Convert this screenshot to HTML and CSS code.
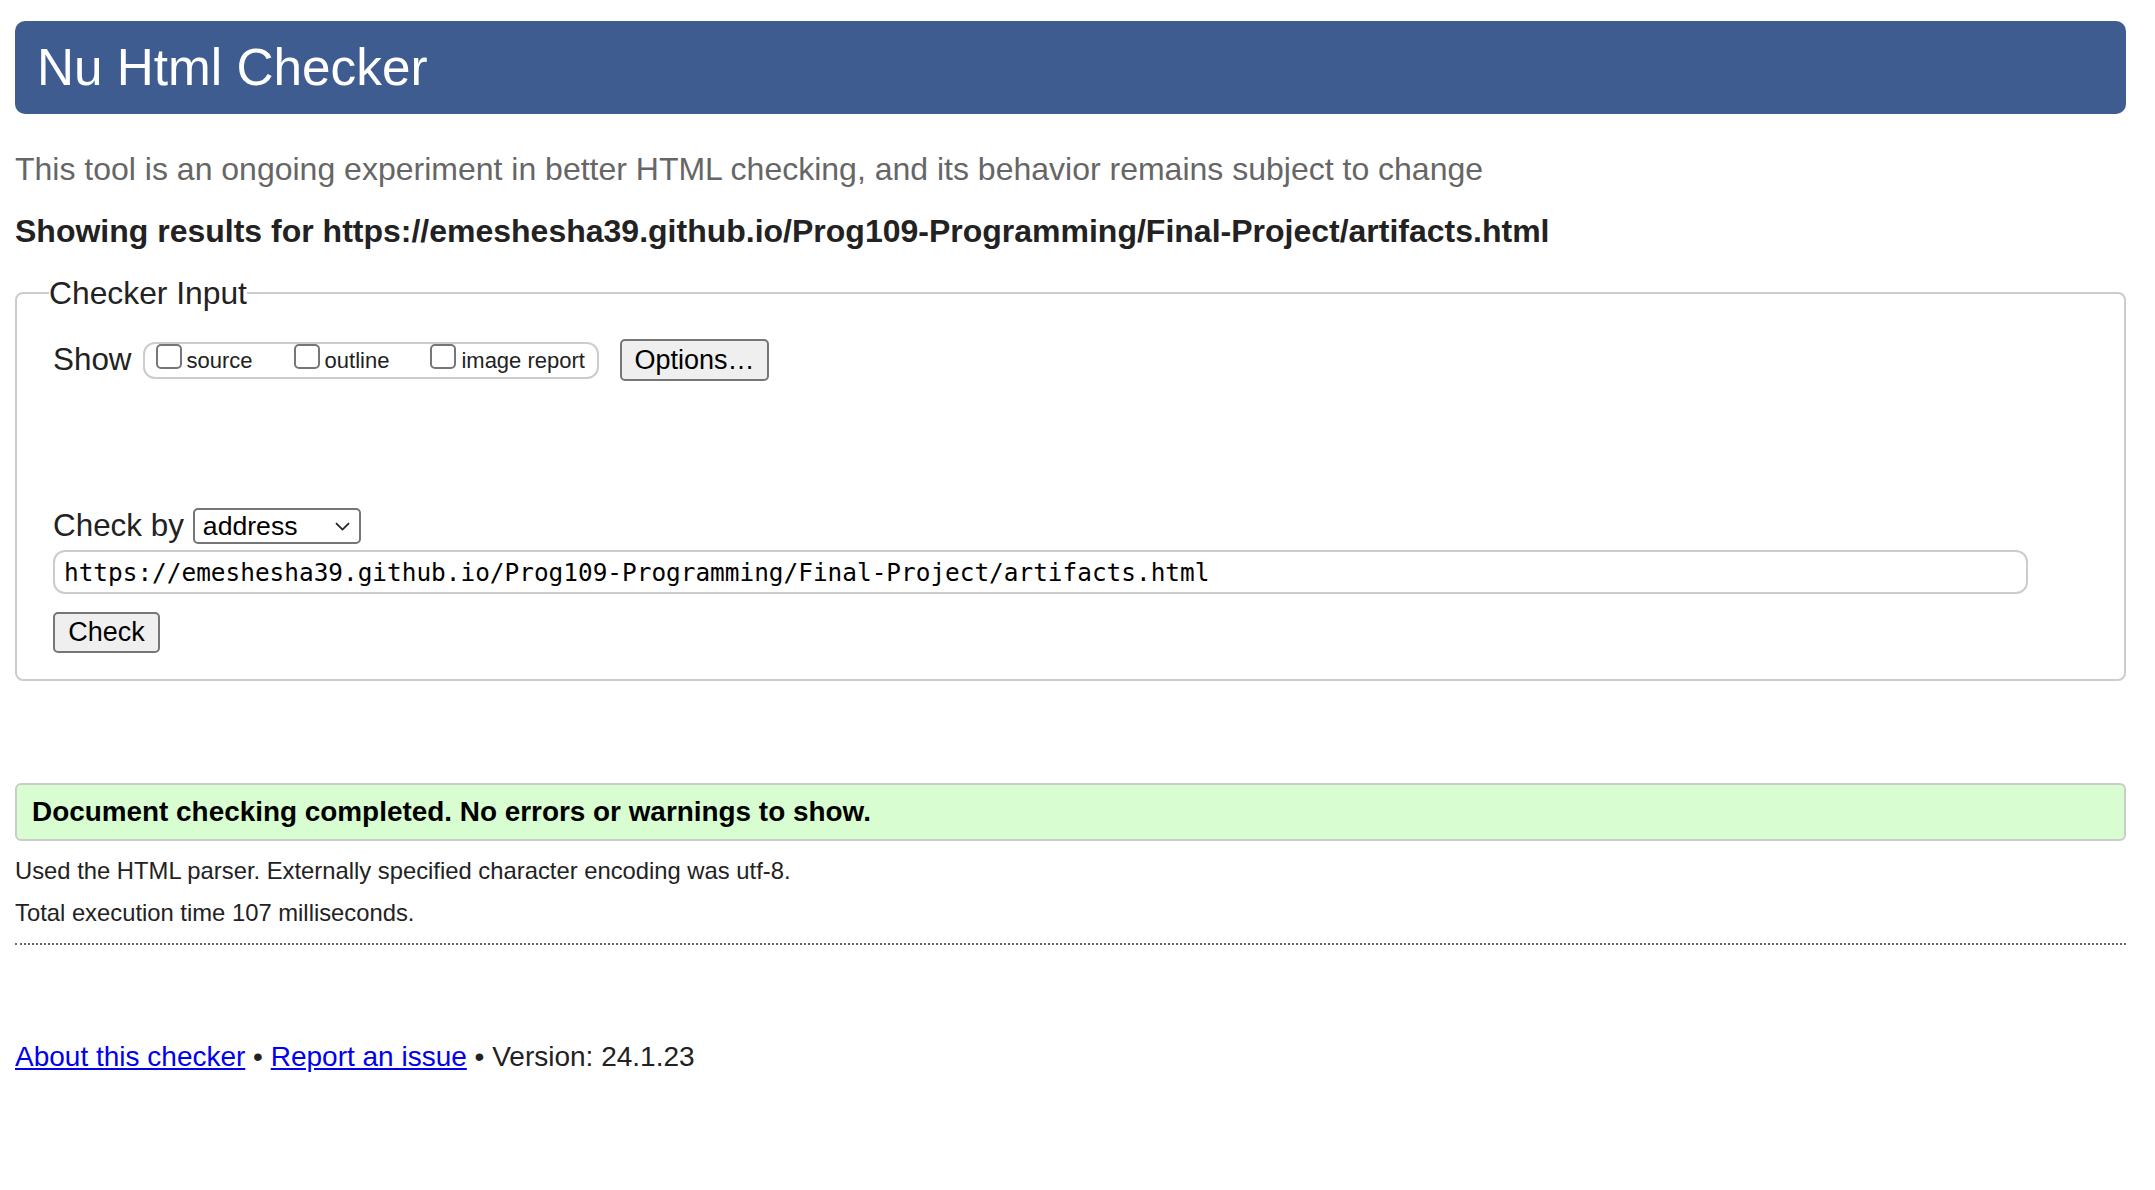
FILE: index.html
```html
<!DOCTYPE html>
<html lang="en">
<head>
<meta charset="utf-8">
<title>Showing results for https://emeshesha39.github.io/Prog109-Programming/Final-Project/artifacts.html - Nu Html Checker</title>
<link rel="stylesheet" href="styles.css">
</head>
<body>
<div class="page">
  <h1 class="title">Nu Html Checker</h1>
  <p class="intro">This tool is an ongoing experiment in better HTML checking, and its behavior remains subject to change</p>
  <p class="showing">Showing results for https://emeshesha39.github.io/Prog109-Programming/Final-Project/artifacts.html</p>

  <form class="checker-form">
    <fieldset class="checker">
      <legend class="legend">Checker Input</legend>
      <div class="show-row">
        <span class="row-label">Show</span>
        <span class="opts">
          <label class="opt"><input class="cb" type="checkbox">source</label>
          <label class="opt"><input class="cb" type="checkbox">outline</label>
          <label class="opt"><input class="cb" type="checkbox">image report</label>
        </span>
        <button type="button" class="btn btn-options">Options…</button>
      </div>
      <div class="checkby-row">
        <span class="row-label">Check by</span>
        <span class="select-wrap">
          <select class="select"><option>address</option></select>
          <svg class="chev" width="15" height="9" viewBox="0 0 15 9" aria-hidden="true"><path d="M1 1.2 L7.5 7.6 L14 1.2" fill="none" stroke="#222" stroke-width="1.8"/></svg>
        </span>
      </div>
      <input class="url" type="url" value="https://emeshesha39.github.io/Prog109-Programming/Final-Project/artifacts.html">
      <button type="button" class="btn btn-check">Check</button>
    </fieldset>
  </form>

  <p class="success">Document checking completed. No errors or warnings to show.</p>
  <p class="details first">Used the HTML parser. Externally specified character encoding was utf-8.</p>
  <p class="details">Total execution time 107 milliseconds.</p>
  <hr class="dots">
  <p class="footer"><a href="#">About this checker</a> • <a href="#">Report an issue</a> • Version: 24.1.23</p>
</div>
</body>
</html>
```

FILE: styles.css
```css
html, body {
  margin: 0;
  padding: 0;
  background: #fff;
}

body {
  font-family: "Liberation Sans", Arial, sans-serif;
  color: #222;
}

.page {
  padding: 21px 29px 0 15px;
}

.title {
  margin: 0;
  height: 93px;
  line-height: 93px;
  padding-left: 22px;
  background: #3e5c8f;
  color: #fff;
  font-size: 51.3px;
  font-weight: normal;
  border-radius: 10px;
}

.intro {
  margin: 35px 0 0;
  font-size: 32px;
  line-height: 40px;
  color: #666;
}

.showing {
  margin: 22px 0 0;
  font-size: 32px;
  line-height: 40px;
  font-weight: bold;
  color: #222;
}

.checker-form {
  margin: 22px 0 0;
}

.checker {
  margin: 0;
  padding: 26px 36px 26px 36px;
  border: 2px solid #ccc;
  border-radius: 8px;
  min-width: 0;
}

.legend {
  margin-left: -4px;
  padding: 0;
  font-size: 31.8px;
  line-height: 40px;
  color: #222;
}

.show-row {
  display: flex;
  align-items: center;
  height: 42px;
}

.row-label {
  font-size: 31.4px;
  line-height: 40px;
  color: #222;
}

.show-row .row-label {
  margin-right: 11px;
}

.opts {
  display: flex;
  align-items: center;
  gap: 41px;
  height: 37px;
  box-sizing: border-box;
  padding: 0 12px 0 11px;
  border: 2px solid #ccc;
  border-radius: 12px;
}

.opt {
  display: block;
  font-size: 22px;
  line-height: 33px;
  color: #222;
  white-space: nowrap;
}

.cb {
  -webkit-appearance: none;
  appearance: none;
  display: inline-block;
  box-sizing: border-box;
  width: 26px;
  height: 25px;
  margin: 0 5px 0 0;
  vertical-align: -1px;
  border: 2px solid #767676;
  border-radius: 5px;
  background: #fff;
}

.btn {
  font-family: "Liberation Sans", Arial, sans-serif;
  font-size: 27px;
  color: #000;
  background: #efefef;
  border: 2px solid #767676;
  border-radius: 5px;
  box-sizing: border-box;
  line-height: 1;
}

.btn-options {
  height: 42px;
  width: 149px;
  margin-left: 21px;
  padding: 0;
}

.checkby-row {
  display: flex;
  align-items: center;
  height: 36px;
  margin-top: 127px;
}

.checkby-row .row-label {
  margin-right: 9px;
}

.select-wrap {
  position: relative;
  display: inline-flex;
}

.select {
  -webkit-appearance: none;
  appearance: none;
  box-sizing: border-box;
  width: 168px;
  height: 36px;
  padding: 0 0 0 8px;
  font-family: "Liberation Sans", Arial, sans-serif;
  font-size: 26.6px;
  color: #000;
  background: #fff;
  border: 2px solid #767676;
  border-radius: 5px;
}

.chev {
  position: absolute;
  right: 11px;
  top: 14px;
  pointer-events: none;
}

.url {
  display: block;
  box-sizing: border-box;
  width: 1975px;
  height: 44px;
  margin: 6px 0 0;
  padding: 0 0 0 9px;
  font-family: "DejaVu Sans Mono", "Liberation Mono", monospace;
  font-size: 24.4px;
  color: #000;
  background: #fff;
  border: 2px solid #ccc;
  border-radius: 12px;
  outline: none;
}

.btn-check {
  display: block;
  width: 107px;
  height: 41px;
  margin-top: 18px;
  padding: 0;
}

.success {
  margin: 102px 0 0;
  height: 58px;
  box-sizing: border-box;
  padding: 0 0 0 15px;
  line-height: 54px;
  font-size: 27.9px;
  font-weight: bold;
  color: #000;
  background: #d7fdd0;
  border: 2px solid #ccc;
  border-radius: 6px;
}

.details {
  margin: 12px 0 0;
  font-size: 23.8px;
  line-height: 30px;
  color: #222;
}

.details.first {
  margin-top: 15px;
}

.dots {
  margin: 15px 0 0;
  height: 0;
  border: 0;
  border-top: 2px dotted #666;
}

.footer {
  margin: 95px 0 0;
  font-size: 28px;
  line-height: 34px;
  color: #222;
}

.footer a {
  color: #0000ee;
  text-decoration: underline;
}
```
